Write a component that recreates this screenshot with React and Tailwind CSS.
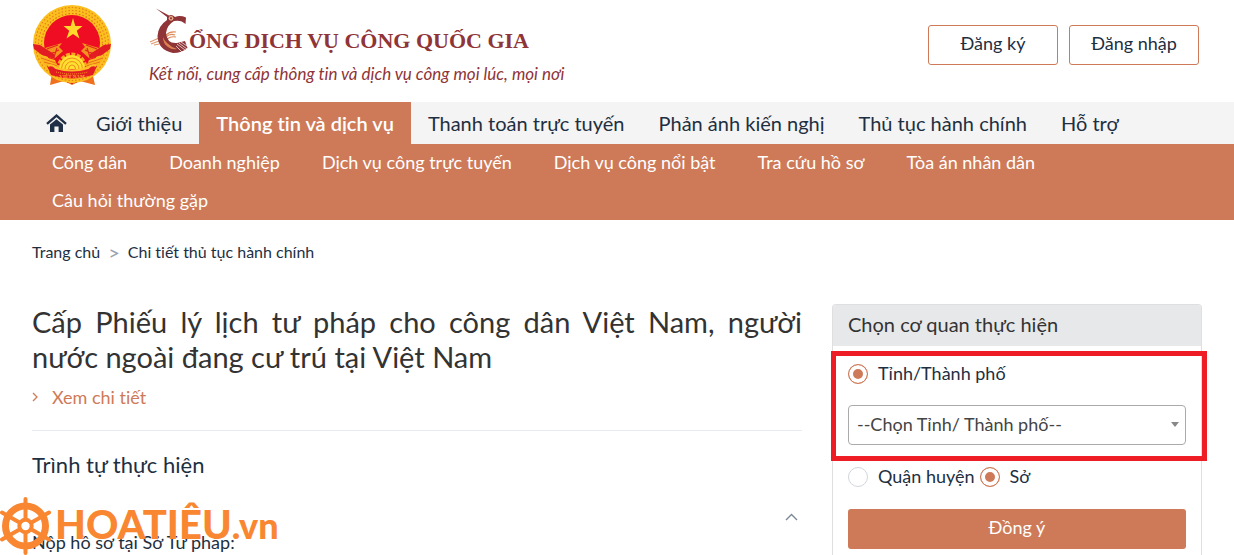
import React from "react";

const menu = [
  { label: "Giới thiệu" },
  { label: "Thông tin và dịch vụ", active: true },
  { label: "Thanh toán trực tuyến" },
  { label: "Phản ánh kiến nghị" },
  { label: "Thủ tục hành chính" },
  { label: "Hỗ trợ" },
];

const subMenu = [
  "Công dân",
  "Doanh nghiệp",
  "Dịch vụ công trực tuyến",
  "Dịch vụ công nổi bật",
  "Tra cứu hồ sơ",
  "Tòa án nhân dân",
  "Câu hỏi thường gặp",
];

function Emblem() {
  return (
    <svg className="w-20 h-20 shrink-0" viewBox="0 0 80 80" aria-hidden="true">
      <path d="M21 62 L18 80 L32 76 L40 80 L48 76 L63 80 L59 62 Z" fill="#f0701c" />
      <path d="M35 72h2v6h-2zM39 72h2v7h-2zM43 72h2v6h-2z" fill="#e0231c" />
      <circle cx="40" cy="39" r="39" fill="#fbc01e" />
      <circle cx="40" cy="39" r="36.5" fill="none" stroke="#e8801a" strokeWidth="1.2" strokeDasharray="1.5 2" />
      <circle cx="40" cy="39" r="33.5" fill="none" stroke="#e8801a" strokeWidth="1.2" strokeDasharray="1.5 2" />
      <circle cx="40" cy="39" r="30.5" fill="none" stroke="#e8701a" strokeWidth="1.2" strokeDasharray="1.5 2" />
      <circle cx="40" cy="38" r="28" fill="#ee0d22" />
      <path
        d="M41 13 L43.3 21 L50.5 21 L44.8 25.8 L47.5 33.5 L41 29 L34.5 33.5 L37.2 25.8 L31.5 21 L38.7 21 Z"
        fill="#ffd92b"
      />
      <path d="M13 43 L30 38 L27 42 L31 46 L22 54 L12 50 Z M67 43 L50 38 L53 42 L49 46 L58 54 L68 50 Z" fill="#f3941e" />
      <path
        d="M15 44l11-4M18 49l9-4M22 52l3-9M65 44l-11-4M62 49l-9-4M58 52l-3-9"
        stroke="#e3261e"
        strokeWidth="1.2"
      />
      <path d="M1 39 L8 40 L22 49 L23 54 L10 50 L2 44 Z M79 39 L72 40 L58 49 L57 54 L70 50 L78 44 Z" fill="#e31b22" />
      <path d="M6 50 L23 55 L27 64 L14 62 Z M74 50 L57 55 L53 64 L66 62 Z" fill="#fbb41e" />
      <path d="M9 53l15 5M12 57l14 4M71 53l-15 5M68 57l-14 4" stroke="#e8701a" strokeWidth="1" />
      <path d="M26 64a14 15 0 0 1 28 0" fill="none" stroke="#f7a81b" strokeWidth="3" strokeDasharray="4 1.5" />
      <path d="M27 64a13 14 0 0 1 26 0z" fill="#ffdf2f" />
      <path
        d="M29.5 64a10.5 11 0 0 1 21 0M33 64a7 7.5 0 0 1 14 0M36.5 64a3.5 4 0 0 1 7 0"
        fill="none"
        stroke="#f08c1c"
        strokeWidth="1"
      />
      <path d="M15 61 Q19 58 24 63 Q40 68 56 63 Q61 58 65 61 L61 70 Q40 77 19 70 Z" fill="#e31b22" />
      <path d="M16 61 Q20 59 24 63 Q40 68 56 63 Q60 59 64 61" fill="none" stroke="#ffc02a" strokeWidth="2" />
      <path d="M24 67 Q40 71 56 67" fill="none" stroke="#f7a81b" strokeWidth="1" strokeDasharray="1 1" />
      <text
        x="40"
        y="73"
        textAnchor="middle"
        fontSize="5"
        fontWeight="bold"
        fontFamily="Liberation Serif, serif"
        fill="#ffb02a"
      >
        VIỆT NAM
      </text>
    </svg>
  );
}

function BirdLogo() {
  return (
    <svg className="w-10 h-12 shrink-0" viewBox="0 0 40 48" aria-hidden="true">
      {/* wings */}
      <path d="M1 34l9-4M2 36l8-3M5 37l5-1" stroke="#e09a70" strokeWidth="1.2" />
      <path d="M17 27q4-4 10-3M17 29q4-4 9-2M18 31q4-3 9-2" stroke="#dd8a58" strokeWidth="1.2" fill="none" />
      {/* beak, head and body */}
      <path
        d="M7 0.5 L20 7.5 Q23 6 26 9 Q31 7 37 9.5 L36.5 16 Q32 11.5 25 13 Q18 17 17 25 Q18 36 28 35 L36 33 L38.5 40 Q33 45 24 45 Q9 42 8.5 28 Q9 18 18 12 L18 9 Z"
        fill="#8f3437"
      />
      <path d="M14 29 Q14 36 19 39 Q23 42 28 41 Q22 39 18 35 Q15 32 14 29 Z" fill="#dc8250" />
      <circle cx="22" cy="10.3" r="2.4" fill="#e9b08c" />
      <circle cx="22" cy="10.3" r="1.1" fill="#8f3437" />
      <path d="M28 36l8 6M30 35l8 6M27 38l6 6M32 34l6 4" stroke="#fff" strokeWidth="0.7" />
    </svg>
  );
}

function HomeIcon() {
  return (
    <svg className="w-[21px] h-[18px]" viewBox="0 0 21 18" aria-hidden="true">
      <path d="M1 9.8 L10.5 1.7 L20 9.8" fill="none" stroke="#1f2f46" strokeWidth="2.4" />
      <path d="M4 10.6 L10.5 5.2 L17 10.6 V18 H12.6 V12.5 H8.4 V18 H4 Z" fill="#1f2f46" />
    </svg>
  );
}

function Wheel() {
  return (
    <svg className="w-[51px] h-[58px] shrink-0" viewBox="0 0 51 58" fill="none" stroke="#f98731" aria-hidden="true">
      <circle cx="25.5" cy="29" r="20" strokeWidth="7" />
      <circle cx="25.5" cy="29" r="6.2" strokeWidth="4" />
      <g strokeWidth="4" strokeLinecap="round">
        <path d="M25.5 2V22M25.5 36V56" />
        <path d="M2 15.5L19.5 25.5M31.5 32.5L49 42.5" />
        <path d="M49 15.5L31.5 25.5M19.5 32.5L2 42.5" />
      </g>
    </svg>
  );
}

function Radio({ id, name, label, defaultChecked }) {
  return (
    <div className="flex items-center gap-[10px]">
      <input
        id={id}
        name={name}
        type="radio"
        defaultChecked={defaultChecked}
        className="appearance-none w-5 h-5 rounded-full border border-gray-300 bg-white checked:border-[#ce7a58] checked:bg-[#ce7a58] checked:shadow-[inset_0_0_0_4px_#fff]"
      />
      <label htmlFor={id} className="pb-0.5 text-lg leading-[22px]">
        {label}
      </label>
    </div>
  );
}

export default function App() {
  return (
    <div className="relative min-h-screen flex flex-col overflow-hidden bg-white text-[#1e2f41] font-[Lato,'Noto_Sans',sans-serif] [font-variant-ligatures:none]">
      {/* Header */}
      <header className="flex items-start justify-between px-8 h-[102px]">
        <a href="#" className="flex items-start text-[#8f3437]">
          <span className="pt-[5px] mr-[37px]">
            <Emblem />
          </span>
          <span className="pt-2">
            <span className="flex">
              <BirdLogo />
              <span className="pt-[19px] text-[22px] leading-7 font-bold whitespace-nowrap font-['Liberation_Serif',serif]">
                ỔNG DỊCH VỤ CÔNG QUỐC GIA
              </span>
            </span>
            <span className="block pt-2 text-[17px] leading-5 italic whitespace-nowrap">
              Kết nối, cung cấp thông tin và dịch vụ công mọi lúc, mọi nơi
            </span>
          </span>
        </a>
        <div className="flex gap-[11px] pt-[25px] pr-[3px]">
          <button className="w-[130px] h-10 pb-1 rounded-[3px] border border-[#ce7a58] text-lg">Đăng ký</button>
          <button className="w-[130px] h-10 pb-1 rounded-[3px] border border-[#ce7a58] text-lg">Đăng nhập</button>
        </div>
      </header>

      {/* Main menu */}
      <nav className="bg-[#f4f4f4] px-8">
        <ul className="flex h-[42px] text-xl">
          <li>
            <a href="#" aria-label="Trang chủ" className="flex items-center h-full pl-[14px] pr-3">
              <HomeIcon />
            </a>
          </li>
          {menu.map((item) => (
            <li key={item.label}>
              <a
                href="#"
                className={
                  item.active
                    ? "flex items-center h-full px-[17px] whitespace-nowrap bg-[#ce7a58] text-white font-semibold"
                    : "flex items-center h-full px-[17px] whitespace-nowrap"
                }
              >
                {item.label}
              </a>
            </li>
          ))}
        </ul>
      </nav>

      {/* Sub menu */}
      <nav className="bg-[#ce7a58] px-[31px] text-white">
        <ul className="flex flex-wrap text-lg">
          {subMenu.map((label) => (
            <li key={label}>
              <a href="#" className="flex items-center h-[38px] px-[21px] pb-0.5 whitespace-nowrap">
                {label}
              </a>
            </li>
          ))}
        </ul>
      </nav>

      <div className="flex-1 flex flex-col px-8">
        <div className="flex gap-2 pt-5 text-base leading-6">
          <a href="#">Trang chủ</a>
          <span className="text-xl leading-6 text-gray-400">&gt;</span>
          <a href="#">Chi tiết thủ tục hành chính</a>
        </div>

        <div className="flex-1 flex gap-[30px] pt-10">
          <main className="flex-1">
            <h1 className="pb-0.5 text-[29px] leading-[35px] text-justify text-[#333]">
              Cấp Phiếu lý lịch tư pháp cho công dân Việt Nam, người nước ngoài đang cư trú tại Việt Nam
            </h1>
            <a href="#" className="flex items-center gap-[14px] pt-[7px] text-lg leading-7 text-[#ce7a58]">
              <svg className="w-[6px] h-[10px]" viewBox="0 0 6 10" fill="none" stroke="currentColor" strokeWidth="1.3">
                <path d="M1 1l4 4-4 4" />
              </svg>
              Xem chi tiết
            </a>
            <hr className="mt-[19px] border-[#e6eaf3]" />
            <h2 className="pt-[18px] text-[22px] leading-8">Trình tự thực hiện</h2>
            <div className="flex justify-end pt-[30px] pr-0.5">
              <button aria-label="Thu gọn" className="p-0.5">
                <svg className="w-[13px] h-2" viewBox="0 0 13 8" fill="none" stroke="#7b8794" strokeWidth="1.4">
                  <path d="M1 7l5.5-5.5L12 7" />
                </svg>
              </button>
            </div>
            <p className="pt-[7px] text-lg leading-6">Nộp hồ sơ tại Sở Tư pháp:</p>
          </main>

          <aside className="w-[370px] rounded-t-[4px] border border-b-0 border-[#dfdfdf]">
            <h2 className="h-[41px] px-[15px] text-xl leading-[38px] rounded-t-[3px] bg-[#e7e8ea] text-[#333]">
              Chọn cơ quan thực hiện
            </h2>
            <form className="px-[15px] pt-4">
              <div className="relative">
                <Radio id="province" name="area" label="Tỉnh/Thành phố" defaultChecked />
                <div className="relative mt-[19px]">
                  <select
                    aria-label="Tỉnh/Thành phố"
                    className="appearance-none w-full h-10 px-2 pb-0.5 rounded-[4px] border border-[#aaa] bg-white text-lg text-[#444]"
                  >
                    <option>--Chọn Tỉnh/ Thành phố--</option>
                  </select>
                  <svg className="absolute right-[7px] top-[17px] w-2 h-[5px]" viewBox="0 0 8 5" fill="#888">
                    <path d="M0 0h8L4 5z" />
                  </svg>
                </div>
                <div className="absolute -left-[17px] -right-[21px] -top-[11px] -bottom-4 border-[5px] border-[#ee1c25] pointer-events-none" />
              </div>
              <div className="flex gap-[5px] pt-5">
                <Radio id="district" name="level" label="Quận huyện" />
                <Radio id="department" name="level" label="Sở" defaultChecked />
              </div>
              <button type="button" className="w-full h-10 mt-5 pb-1 rounded-[3px] bg-[#ce7a58] text-white text-lg">
                Đồng ý
              </button>
            </form>
          </aside>
        </div>
      </div>

      {/* Watermark */}
      <div className="absolute left-0 bottom-0 flex items-center gap-1 text-[#f98731] font-black pointer-events-none">
        <Wheel />
        <span className="pb-1 text-[40px] leading-none">
          HOATIÊU<span className="text-[36px]">.vn</span>
        </span>
      </div>
    </div>
  );
}
